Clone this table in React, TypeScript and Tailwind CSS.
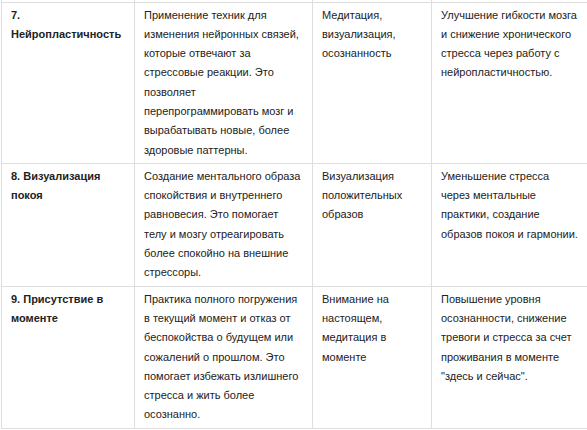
const rows = [
  {
    title: "7. Нейропластичность",
    desc: "Применение техник для изменения нейронных связей, которые отвечают за стрессовые реакции. Это позволяет перепрограммировать мозг и вырабатывать новые, более здоровые паттерны.",
    methods: "Медитация, визуализация, осознанность",
    effect: "Улучшение гибкости мозга и снижение хронического стресса через работу с нейропластичностью.",
  },
  {
    title: "8. Визуализация покоя",
    desc: "Создание ментального образа спокойствия и внутреннего равновесия. Это помогает телу и мозгу отреагировать более спокойно на внешние стрессоры.",
    methods: "Визуализация положительных образов",
    effect: "Уменьшение стресса через ментальные практики, создание образов покоя и гармонии.",
  },
  {
    title: "9. Присутствие в моменте",
    desc: "Практика полного погружения в текущий момент и отказ от беспокойства о будущем или сожалений о прошлом. Это помогает избежать излишнего стресса и жить более осознанно.",
    methods: "Внимание на настоящем, медитация в моменте",
    effect: "Повышение уровня осознанности, снижение тревоги и стресса за счет проживания в моменте \"здесь и сейчас\".",
  },
];

const cell = "border border-[#dedede] px-[9px] py-[3px] align-top";

export default function App() {
  return (
    <div className="w-[587px] h-[430px] overflow-hidden bg-white">
      <table
        className="table-fixed border-collapse ml-px w-[592px] text-[11px] leading-[1.755] text-[#222]"
        style={{ fontFamily: '"Liberation Sans", Arial, sans-serif' }}
      >
        <colgroup>
          <col className="w-[133px]" />
          <col className="w-[178px]" />
          <col className="w-[119px]" />
          <col className="w-[162px]" />
        </colgroup>
        <tbody>
          <tr className="h-[2px]">
            <td className="border-x border-[#dedede] p-0" />
            <td className="border-x border-[#dedede] p-0" />
            <td className="border-x border-[#dedede] p-0" />
            <td className="border-x border-[#dedede] p-0" />
          </tr>
          {rows.map((r) => (
            <tr key={r.title}>
              <td className={`${cell} font-bold`}>{r.title}</td>
              <td className={cell}>{r.desc}</td>
              <td className={cell}>{r.methods}</td>
              <td className={`${cell} pr-[15px]`}>{r.effect}</td>
            </tr>
          ))}
        </tbody>
      </table>
    </div>
  );
}
